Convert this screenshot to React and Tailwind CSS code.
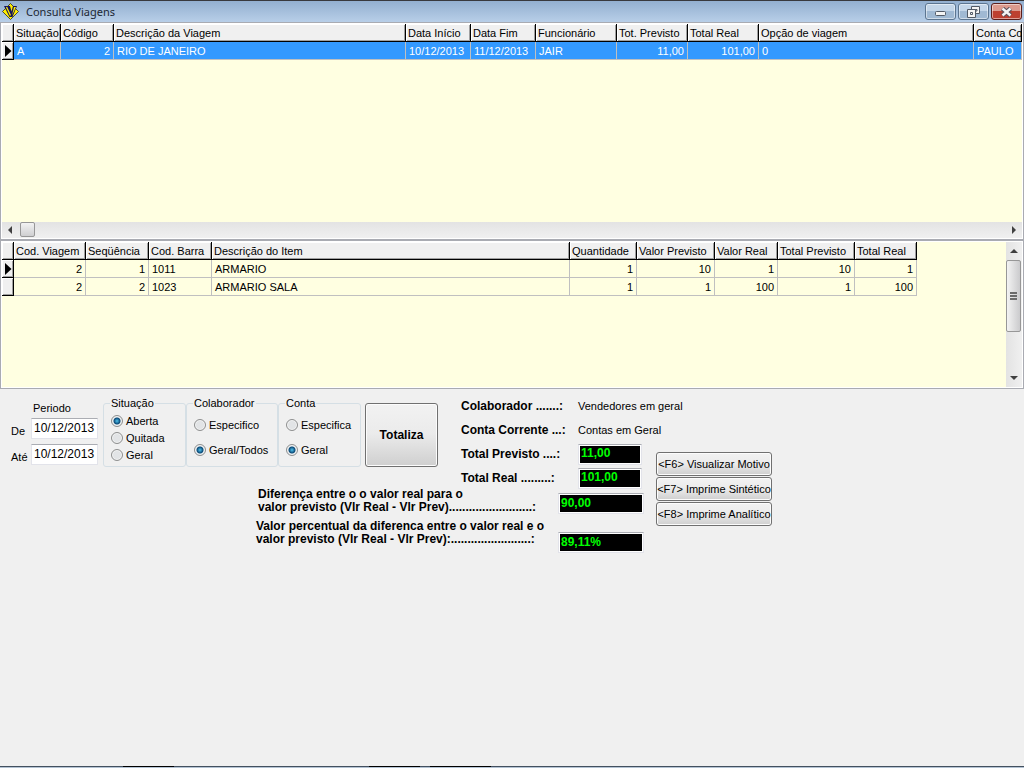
import React from 'react';

const VIAGEM_COLS = [
  { label: 'Situação', width: 'w-[47px]' },
  { label: 'Código', width: 'w-[53px]', right: true },
  { label: 'Descrição da Viagem', width: 'w-[292px]' },
  { label: 'Data Início', width: 'w-[65px]' },
  { label: 'Data Fim', width: 'w-[65px]' },
  { label: 'Funcionário', width: 'w-[81px]' },
  { label: 'Tot. Previsto', width: 'w-[71px]', right: true },
  { label: 'Total Real', width: 'w-[71px]', right: true },
  { label: 'Opção de viagem', width: 'w-[215px]' },
  { label: 'Conta Co', width: 'w-auto' },
];

const VIAGENS = [
  ['A', '2', 'RIO DE JANEIRO', '10/12/2013', '11/12/2013', 'JAIR', '11,00', '101,00', '0', 'PAULO'],
];

const ITEM_COLS = [
  { label: 'Cod. Viagem', width: 'w-[72px]', right: true },
  { label: 'Seqüência', width: 'w-[63px]', right: true },
  { label: 'Cod. Barra', width: 'w-[63px]' },
  { label: 'Descrição do Item', width: 'w-[358px]' },
  { label: 'Quantidade', width: 'w-[67px]', right: true },
  { label: 'Valor Previsto', width: 'w-[78px]', right: true },
  { label: 'Valor Real', width: 'w-[63px]', right: true },
  { label: 'Total Previsto', width: 'w-[77px]', right: true },
  { label: 'Total Real', width: 'w-[62px]', right: true },
];

const ITENS = [
  ['2', '1', '1011', 'ARMARIO', '1', '10', '1', '10', '1'],
  ['2', '2', '1023', 'ARMARIO SALA', '1', '1', '100', '1', '100'],
];

const bevel = 'bg-[#f0f0f0] shadow-[inset_1px_1px_0_#fff,inset_-1px_-1px_0_#a0a0a0]';

function Grid({ cols, rows, selected, className }) {
  return (
    <table className={`table-fixed border-separate border-spacing-0 text-left leading-4 ${className}`}>
      <colgroup>
        <col className="w-3" />
        {cols.map((c) => <col key={c.label} className={c.width} />)}
      </colgroup>
      <thead>
        <tr className="h-[18px]">
          <td className={`p-0 border-r border-b border-black ${bevel}`} />
          {cols.map((c) => (
            <th key={c.label} className={`p-0 pl-[2px] font-normal whitespace-nowrap overflow-hidden border-r border-b border-black ${bevel}`}>{c.label}</th>
          ))}
        </tr>
      </thead>
      <tbody>
        {rows.map((row, i) => (
          <tr key={i} className={`h-[18px] ${selected === i ? 'bg-[#3399ff] text-white' : ''}`}>
            <td className={`p-0 border-r border-b border-black ${bevel}`}>
              {i === 0 && (
                <svg className="block ml-[3px]" width="7" height="12" viewBox="0 0 7 12"><path d="M0 0L6.5 6L0 12Z" fill="#000" /></svg>
              )}
            </td>
            {row.map((v, j) => (
              <td key={j} className={`py-0 px-[3px] whitespace-nowrap overflow-hidden border-r border-b border-[#c0c0c0] ${cols[j].right ? 'text-right' : ''}`}>{v}</td>
            ))}
          </tr>
        ))}
      </tbody>
    </table>
  );
}

function Arrow({ dir }) {
  const paths = { left: 'M6 0V8L2 4Z', right: 'M2 0V8L6 4Z', up: 'M0 6H8L4 2Z', down: 'M0 2H8L4 6Z' };
  return <svg width="8" height="8" viewBox="0 0 8 8"><path d={paths[dir]} fill="#404040" /></svg>;
}

function CaptionButton({ label, className, children }) {
  return (
    <button aria-label={label} className={`w-[31px] h-[17px] flex items-center justify-center rounded-[3px] border shadow-[inset_0_0_0_1px_rgba(255,255,255,0.5)] ${className}`}>
      {children}
    </button>
  );
}

function TitleBar() {
  const blue = 'border-[#5c7590] bg-linear-to-b from-[#c3d5e8] from-50% to-[#a0b9d3] to-50%';
  return (
    <header className="h-[22px] shrink-0 flex items-center border-t border-[#38393d] bg-linear-to-b from-[#93afd0] to-[#b8cfe8]">
      <svg className="ml-[2px]" width="17" height="17" viewBox="0 0 17 17">
        <path d="M8.5 0.5L16.5 8.5L8.5 16.5L0.5 8.5Z" fill="#ffee00" stroke="#2a2a20" strokeWidth="0.8" />
        <path d="M2 3H8L9.5 8.5L11 3H15L10.5 14H7.5Z" fill="#14145a" />
        <path d="M4.5 4L8.5 12.5" stroke="#ffee00" strokeWidth="1.3" />
        <path d="M12 4H14L10 12.5Z" fill="#ffee00" />
      </svg>
      <h1 className="ml-[7px] font-['Noto_Sans',sans-serif] text-[11px] leading-4 text-[#1c2733]">Consulta Viagens</h1>
      <div className="ml-auto mr-[2px] flex gap-[2px]">
        <CaptionButton label="Minimizar" className={blue}>
          <svg className="mt-[3px]" width="11" height="5" viewBox="0 0 11 5"><rect x="0.5" y="0.5" width="10" height="4" rx="1" fill="#f4f4f4" stroke="#525a66" /></svg>
        </CaptionButton>
        <CaptionButton label="Restaurar" className={blue}>
          <svg width="13" height="12" viewBox="0 0 13 12" fill="#f4f4f4" stroke="#525a66">
            <path d="M4.5 0.5H12.5V7.5H4.5Z" /><path d="M7 3.5H10V5H7Z" />
            <path d="M0.5 3.5H8.5V11.5H0.5Z" /><path d="M3.5 6.5H5.5V8.5H3.5Z" />
          </svg>
        </CaptionButton>
        <CaptionButton label="Fechar" className="border-[#5b1f1b] bg-linear-to-b from-[#dc9a8d] from-50% to-[#bd4030] to-50%">
          <svg width="13" height="10" viewBox="0 0 13 10"><path d="M2.5 1.5L10.5 8.5M10.5 1.5L2.5 8.5" stroke="#59505a" strokeWidth="4.6" /><path d="M2.5 1.5L10.5 8.5M10.5 1.5L2.5 8.5" stroke="#f4f4f4" strokeWidth="2.4" /></svg>
        </CaptionButton>
      </div>
    </header>
  );
}

function RadioGroup({ title, name, options, value, className }) {
  return (
    <fieldset className={`h-[70px] min-w-0 shrink-0 border border-[#d5dfe5] rounded-[3px] px-[7px] pt-[3px] ${className}`}>
      <legend className="-ml-[1px] px-[1px] leading-3 h-3">{title}</legend>
      <div className="flex flex-col justify-around h-[51px]">
        {options.map((o) => (
          <label key={o} className="flex items-center gap-[3px] leading-4 whitespace-nowrap">
            <input
              type="radio"
              name={name}
              defaultChecked={o === value}
              className="appearance-none m-0 w-3 h-3 shrink-0 rounded-full border border-[#8e8f8f] bg-[#e2e4e6] shadow-[inset_0_0_0_1px_#f4f4f4] checked:bg-[radial-gradient(circle,#4fc3ee_0,#0b4a78_3px,#dfe6ea_4px)]"
            />
            {o}
          </label>
        ))}
      </div>
    </fieldset>
  );
}

function DateField({ id, label }) {
  return (
    <div className="flex items-end justify-between">
      <label htmlFor={id} className="leading-4">{label}</label>
      <input id={id} defaultValue="10/12/2013" className="w-[67px] h-[21px] px-[2px] pb-[2px] text-[12px] bg-white border border-[#e2e3ea] border-t-[#abadb3]" />
    </div>
  );
}

function Display({ id, value, className }) {
  return (
    <input id={id} readOnly value={value} className={`block h-[21px] px-[2px] pb-[2px] bg-black text-[#00ff00] font-bold text-[12px] border border-[#e2e3ea] border-t-[#abadb3] shadow-[inset_0_0_0_1px_#fff] ${className}`} />
  );
}

const winButton = 'rounded-[3px] border border-[#707070] bg-linear-to-b from-[#f2f2f2] from-0% via-[#ebebeb] via-48% to-[#cfcfcf] shadow-[inset_0_0_0_1px_#fcfcfc]';

export default function App() {
  return (
    <div className="min-h-screen flex flex-col bg-[#f0f0f0] text-black font-['Liberation_Sans',Arial,sans-serif] text-[11px]">
      <TitleBar />

      <section className="h-[218px] flex flex-col border border-[#a9abb2] bg-[#ffffe1] shadow-[inset_0_0_0_1px_#fff] p-px">
        <div className="flex-1 overflow-hidden">
          <Grid cols={VIAGEM_COLS} rows={VIAGENS} selected={0} className="w-full min-w-[1020px]" />
        </div>
        <div className="h-4 flex items-center px-1 pb-px bg-linear-to-b from-[#e3e3e3] to-[#f0f0f0]">
          <Arrow dir="left" />
          <span className="ml-[6px] w-[15px] h-[15px] rounded-[2px] border border-[#979797] bg-linear-to-b from-[#f3f3f3] to-[#cfcfd1]" />
          <span className="ml-auto flex"><Arrow dir="right" /></span>
        </div>
      </section>

      <section className="h-[149px] flex border border-[#a9abb2] bg-[#ffffe1] shadow-[inset_0_0_0_1px_#fff] p-px">
        <div className="flex-1 overflow-hidden">
          <Grid cols={ITEM_COLS} rows={ITENS} className="w-[915px]" />
        </div>
        <div className="w-4 flex flex-col items-center py-[5px] pr-px bg-linear-to-r from-[#e3e3e3] to-[#f0f0f0]">
          <Arrow dir="up" />
          <span className="mt-[5px] w-[15px] h-[72px] rounded-[2px] border border-[#979797] bg-linear-to-r from-[#f3f3f3] to-[#cbcbcd] flex flex-col items-center justify-center gap-px">
            <i className="w-[7px] h-[2px] bg-[#6b6b6b]" />
            <i className="w-[7px] h-[2px] bg-[#6b6b6b]" />
            <i className="w-[7px] h-[2px] bg-[#6b6b6b]" />
          </span>
          <span className="mt-auto"><Arrow dir="down" /></span>
        </div>
      </section>

      <main className="flex-1 flex items-start pt-2 pl-[11px]">
        <div className="w-[633px] shrink-0">
          <div className="flex items-start">
            <div className="w-[87px] shrink-0 pt-[3px]">
              <div className="pl-[22px] leading-4 mb-[2px]">Periodo</div>
              <div className="flex flex-col gap-[5px]">
                <DateField id="de" label="De" />
                <DateField id="ate" label="Até" />
              </div>
            </div>
            <RadioGroup title="Situação" name="situacao" options={['Aberta', 'Quitada', 'Geral']} value="Aberta" className="ml-[5px] w-[83px]" />
            <RadioGroup title="Colaborador" name="colaborador" options={['Especifico', 'Geral/Todos']} value="Geral/Todos" className="w-[92px]" />
            <RadioGroup title="Conta" name="conta" options={['Especifica', 'Geral']} value="Geral" className="w-[83px]" />
            <button className={`ml-1 mt-[6px] w-[73px] shrink-0 h-16 font-bold text-[12px] ${winButton}`}>Totaliza</button>
            <dl className="ml-[23px] shrink-0 grid grid-cols-[117px_64px] auto-rows-[24px] items-center -mt-[3px] whitespace-nowrap">
              <dt className="font-bold text-[12px]">Colaborador .......:</dt>
              <dd>Vendedores em geral</dd>
              <dt className="font-bold text-[12px]">Conta Corrente ...:</dt>
              <dd>Contas em Geral</dd>
              <dt className="font-bold text-[12px]"><label htmlFor="previsto">Total Previsto ....:</label></dt>
              <dd><Display id="previsto" value="11,00" className="w-16" /></dd>
              <dt className="font-bold text-[12px]"><label htmlFor="real">Total Real .........:</label></dt>
              <dd><Display id="real" value="101,00" className="w-16" /></dd>
            </dl>
          </div>
          <div className="ml-[245px] -mt-[2px] flex flex-col gap-[6px] font-bold text-[12px] leading-[13px]">
            <div className="flex items-end justify-between">
              <label htmlFor="diferenca" className="pl-[2px] whitespace-nowrap">Diferença entre o o valor real para o<br />valor previsto (Vlr Real - Vlr Prev).........................:</label>
              <Display id="diferenca" value="90,00" className="w-[86px]" />
            </div>
            <div className="flex items-start justify-between">
              <label htmlFor="percentual" className="whitespace-nowrap">Valor percentual da diferenca entre o valor real e o<br />valor previsto (Vlr Real - Vlr Prev):........................:</label>
              <Display id="percentual" value="89,11%" className="mt-3 w-[86px]" />
            </div>
          </div>
        </div>
        <div className="ml-3 mt-[55px] flex flex-col gap-[1px]">
          <button className={`w-[116px] h-6 whitespace-nowrap ${winButton}`}>&lt;F6&gt; Visualizar Motivo</button>
          <button className={`w-[116px] h-6 whitespace-nowrap ${winButton}`}>&lt;F7&gt; Imprime Sintético</button>
          <button className={`w-[116px] h-6 whitespace-nowrap ${winButton}`}>&lt;F8&gt; Imprime Analítico</button>
        </div>
      </main>

      <footer className="h-[2px] flex border-t border-[#43505f] bg-[#b4c3d3]">
        <i className="ml-[12%] w-[5%] h-px -mt-px bg-black" />
        <i className="ml-[19%] w-[5%] h-px -mt-px bg-black" />
        <i className="ml-[1%] w-[6%] h-px -mt-px bg-black" />
      </footer>
    </div>
  );
}
